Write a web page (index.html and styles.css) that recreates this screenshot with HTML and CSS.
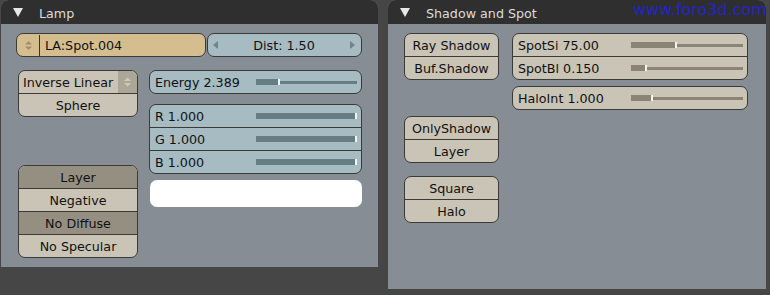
FILE: index.html
```html
<!DOCTYPE html>
<html lang="en">
<head>
  <meta charset="UTF-8">
  <title>Lamp buttons</title>
  <link rel="stylesheet" href="styles.css">
</head>
<body>
  <div class="screen">
    <section class="panel panel-lamp">
      <header class="panel-head">
        <svg class="tri" width="10" height="9" viewBox="0 0 10 9"><polygon points="0,0 10,0 5,9" fill="#e6e7ec"/></svg>
        <span>Lamp</span>
      </header>
      <div class="panel-body lamp-body">
        <div class="row-top">
          <div class="btn name-field">
            <span class="name-arrows">
              <svg width="7" height="9" viewBox="0 0 7 9"><polygon points="0,3.5 3.5,0 7,3.5" fill="#a48e63"/><polygon points="0,5.5 3.5,9 7,5.5" fill="#a48e63"/></svg>
            </span>
            <span class="name-text">LA:Spot.004</span>
          </div>
          <div class="btn num-field">
            <svg width="5" height="8" viewBox="0 0 5 8"><polygon points="5,0 0,4 5,8" fill="#6f858b"/></svg>
            <span>Dist: 1.50</span>
            <svg width="5" height="8" viewBox="0 0 5 8"><polygon points="0,0 5,4 0,8" fill="#6f858b"/></svg>
          </div>
        </div>

        <div class="lamp-cols">
          <div class="col col-left">
            <div class="group beige">
              <div class="cell menu">
                <span class="menu-text">Inverse Linear</span>
                <span class="menu-arrows">
                  <svg width="7" height="10" viewBox="0 0 7 10"><polygon points="0,4 3.5,0.5 7,4" fill="#cdc8bb"/><polygon points="0,6 3.5,9.5 7,6" fill="#cdc8bb"/></svg>
                </span>
              </div>
              <div class="cell">Sphere</div>
            </div>
            <div class="group beige layer-group">
              <div class="cell on">Layer</div>
              <div class="cell">Negative</div>
              <div class="cell on">No Diffuse</div>
              <div class="cell">No Specular</div>
            </div>
          </div>

          <div class="col col-right">
            <div class="group blue">
              <div class="cell slider">
                <span>Energy 2.389</span>
                <div class="track"><div class="fill" style="width: 23.5%"></div><div class="rest"></div></div>
              </div>
            </div>
            <div class="group blue rgb-group">
              <div class="cell slider">
                <span>R 1.000</span>
                <div class="track"><div class="fill" style="width: 100%"></div><div class="rest"></div></div>
              </div>
              <div class="cell slider">
                <span>G 1.000</span>
                <div class="track"><div class="fill" style="width: 100%"></div><div class="rest"></div></div>
              </div>
              <div class="cell slider">
                <span>B 1.000</span>
                <div class="track"><div class="fill" style="width: 100%"></div><div class="rest"></div></div>
              </div>
            </div>
            <div class="color-box"></div>
          </div>
        </div>
      </div>
    </section>

    <section class="panel panel-spot">
      <header class="panel-head">
        <svg class="tri" width="10" height="9" viewBox="0 0 10 9"><polygon points="0,0 10,0 5,9" fill="#e6e7ec"/></svg>
        <span>Shadow and Spot</span>
      </header>
      <div class="panel-body spot-body">
        <div class="col spot-left">
          <div class="group beige">
            <div class="cell">Ray Shadow</div>
            <div class="cell">Buf.Shadow</div>
          </div>
          <div class="group beige only-group">
            <div class="cell">OnlyShadow</div>
            <div class="cell">Layer</div>
          </div>
          <div class="group beige square-group">
            <div class="cell">Square</div>
            <div class="cell">Halo</div>
          </div>
        </div>
        <div class="col spot-right">
          <div class="group beige">
            <div class="cell slider">
              <span>SpotSi 75.00</span>
              <div class="track"><div class="fill" style="width: 41%"></div><div class="rest"></div></div>
            </div>
            <div class="cell slider">
              <span>SpotBl 0.150</span>
              <div class="track"><div class="fill" style="width: 15%"></div><div class="rest"></div></div>
            </div>
          </div>
          <div class="group beige halo-group">
            <div class="cell slider">
              <span>HaloInt 1.000</span>
              <div class="track"><div class="fill" style="width: 20%"></div><div class="rest"></div></div>
            </div>
          </div>
        </div>
      </div>
    </section>

    <div class="watermark">www.foro3d.com</div>
  </div>
</body>
</html>
```

FILE: styles.css
```css
body {
  margin: 0;
  width: 770px;
  height: 295px;
  overflow: hidden;
  background-color: #464646;
  font-family: "DejaVu Sans", Verdana, sans-serif;
  font-size: 12.7px;
  color: #111;
}
.screen {
  position: relative;
  display: flex;
  align-items: flex-start;
  gap: 10px;
  padding-left: 1px;
}
.panel {
  display: flex;
  flex-direction: column;
  background: #878d95;
  border-radius: 8px 8px 0 0;
  overflow: hidden;
}
.panel-lamp {
  width: 377px;
  height: 267px;
}
.panel-spot {
  width: 378px;
  height: 289px;
}
.panel-head {
  display: flex;
  align-items: center;
  height: 24px;
  padding-left: 12px;
  background: #2f2f2f;
  color: #dcdcdc;
}
.panel-head .tri {
  margin-right: 16px;
  margin-top: 1px;
}
.panel-head span {
  padding-top: 2px;
}
.panel-body {
  padding-top: 9px;
}

/* generic buttons */
.btn {
  box-sizing: border-box;
  height: 24px;
  border: 1px solid #3a3a36;
  border-radius: 7px;
  display: flex;
  align-items: center;
  padding-top: 1px;
}
.group {
  border: 1px solid #3a3a36;
  border-radius: 7px;
  overflow: hidden;
}
.cell {
  box-sizing: border-box;
  height: 22px;
  padding-top: 1px;
  display: flex;
  align-items: center;
  justify-content: center;
}
.cell + .cell {
  height: 23px;
  border-top: 1px solid #3a3a36;
}
.beige {
  background: #c9c4b5;
}
.beige .on {
  background: #958f81;
}
.blue {
  background: #a6bcc2;
}

/* sliders */
.slider {
  justify-content: flex-start;
  padding: 0 4px 0 5px;
}
.track {
  display: flex;
  align-items: center;
  width: 50%;
  margin-left: auto;
  height: 7px;
}
.fill {
  box-sizing: border-box;
  height: 6px;
  border-right: 2px solid #f4f4f4;
}
.rest {
  flex: 1;
  height: 3px;
}
.blue .fill,
.blue .rest {
  background: #667d84;
}
.beige .fill,
.beige .rest {
  background: #8b8475;
}

/* lamp panel */
.lamp-body {
  padding-left: 15px;
}
.row-top {
  display: flex;
  gap: 1px;
}
.name-field {
  width: 190px;
  background: #d4be90;
}
.name-arrows {
  box-sizing: border-box;
  width: 23px;
  height: 100%;
  margin-top: -1px;
  display: flex;
  align-items: center;
  justify-content: center;
  border-right: 1px solid #3d3527;
}
.name-text {
  padding-left: 5px;
}
.num-field {
  width: 155px;
  background: #a6bcc2;
  justify-content: space-between;
  padding: 0 6px 0 5px;
}
.lamp-cols {
  display: flex;
  gap: 11px;
  margin-top: 13px;
  padding-left: 2px;
}
.col {
  display: flex;
  flex-direction: column;
}
.col-left {
  width: 120px;
}
.col-right {
  width: 213px;
}
.menu {
  justify-content: space-between;
  padding: 0 0 0 4px;
}
.menu-text {
  padding-top: 1px;
}
.menu-arrows {
  width: 19px;
  height: 100%;
  display: flex;
  align-items: center;
  justify-content: center;
  background: #aca697;
}
.layer-group {
  margin-top: 48px;
}
.rgb-group {
  margin-top: 10px;
}
.color-box {
  height: 27px;
  margin-top: 6px;
  margin-left: 1px;
  background: #fff;
  border-radius: 7px;
}

/* shadow and spot panel */
.spot-body {
  display: flex;
  gap: 13px;
  padding-left: 16px;
}
.spot-left {
  width: 95px;
}
.spot-right {
  width: 236px;
}
.only-group {
  margin-top: 36px;
}
.square-group {
  margin-top: 13px;
}
.halo-group {
  margin-top: 6px;
}

.watermark {
  position: absolute;
  left: 633px;
  top: 2px;
  font-size: 16px;
  line-height: 16px;
  color: #2424c6;
  white-space: nowrap;
}
```
